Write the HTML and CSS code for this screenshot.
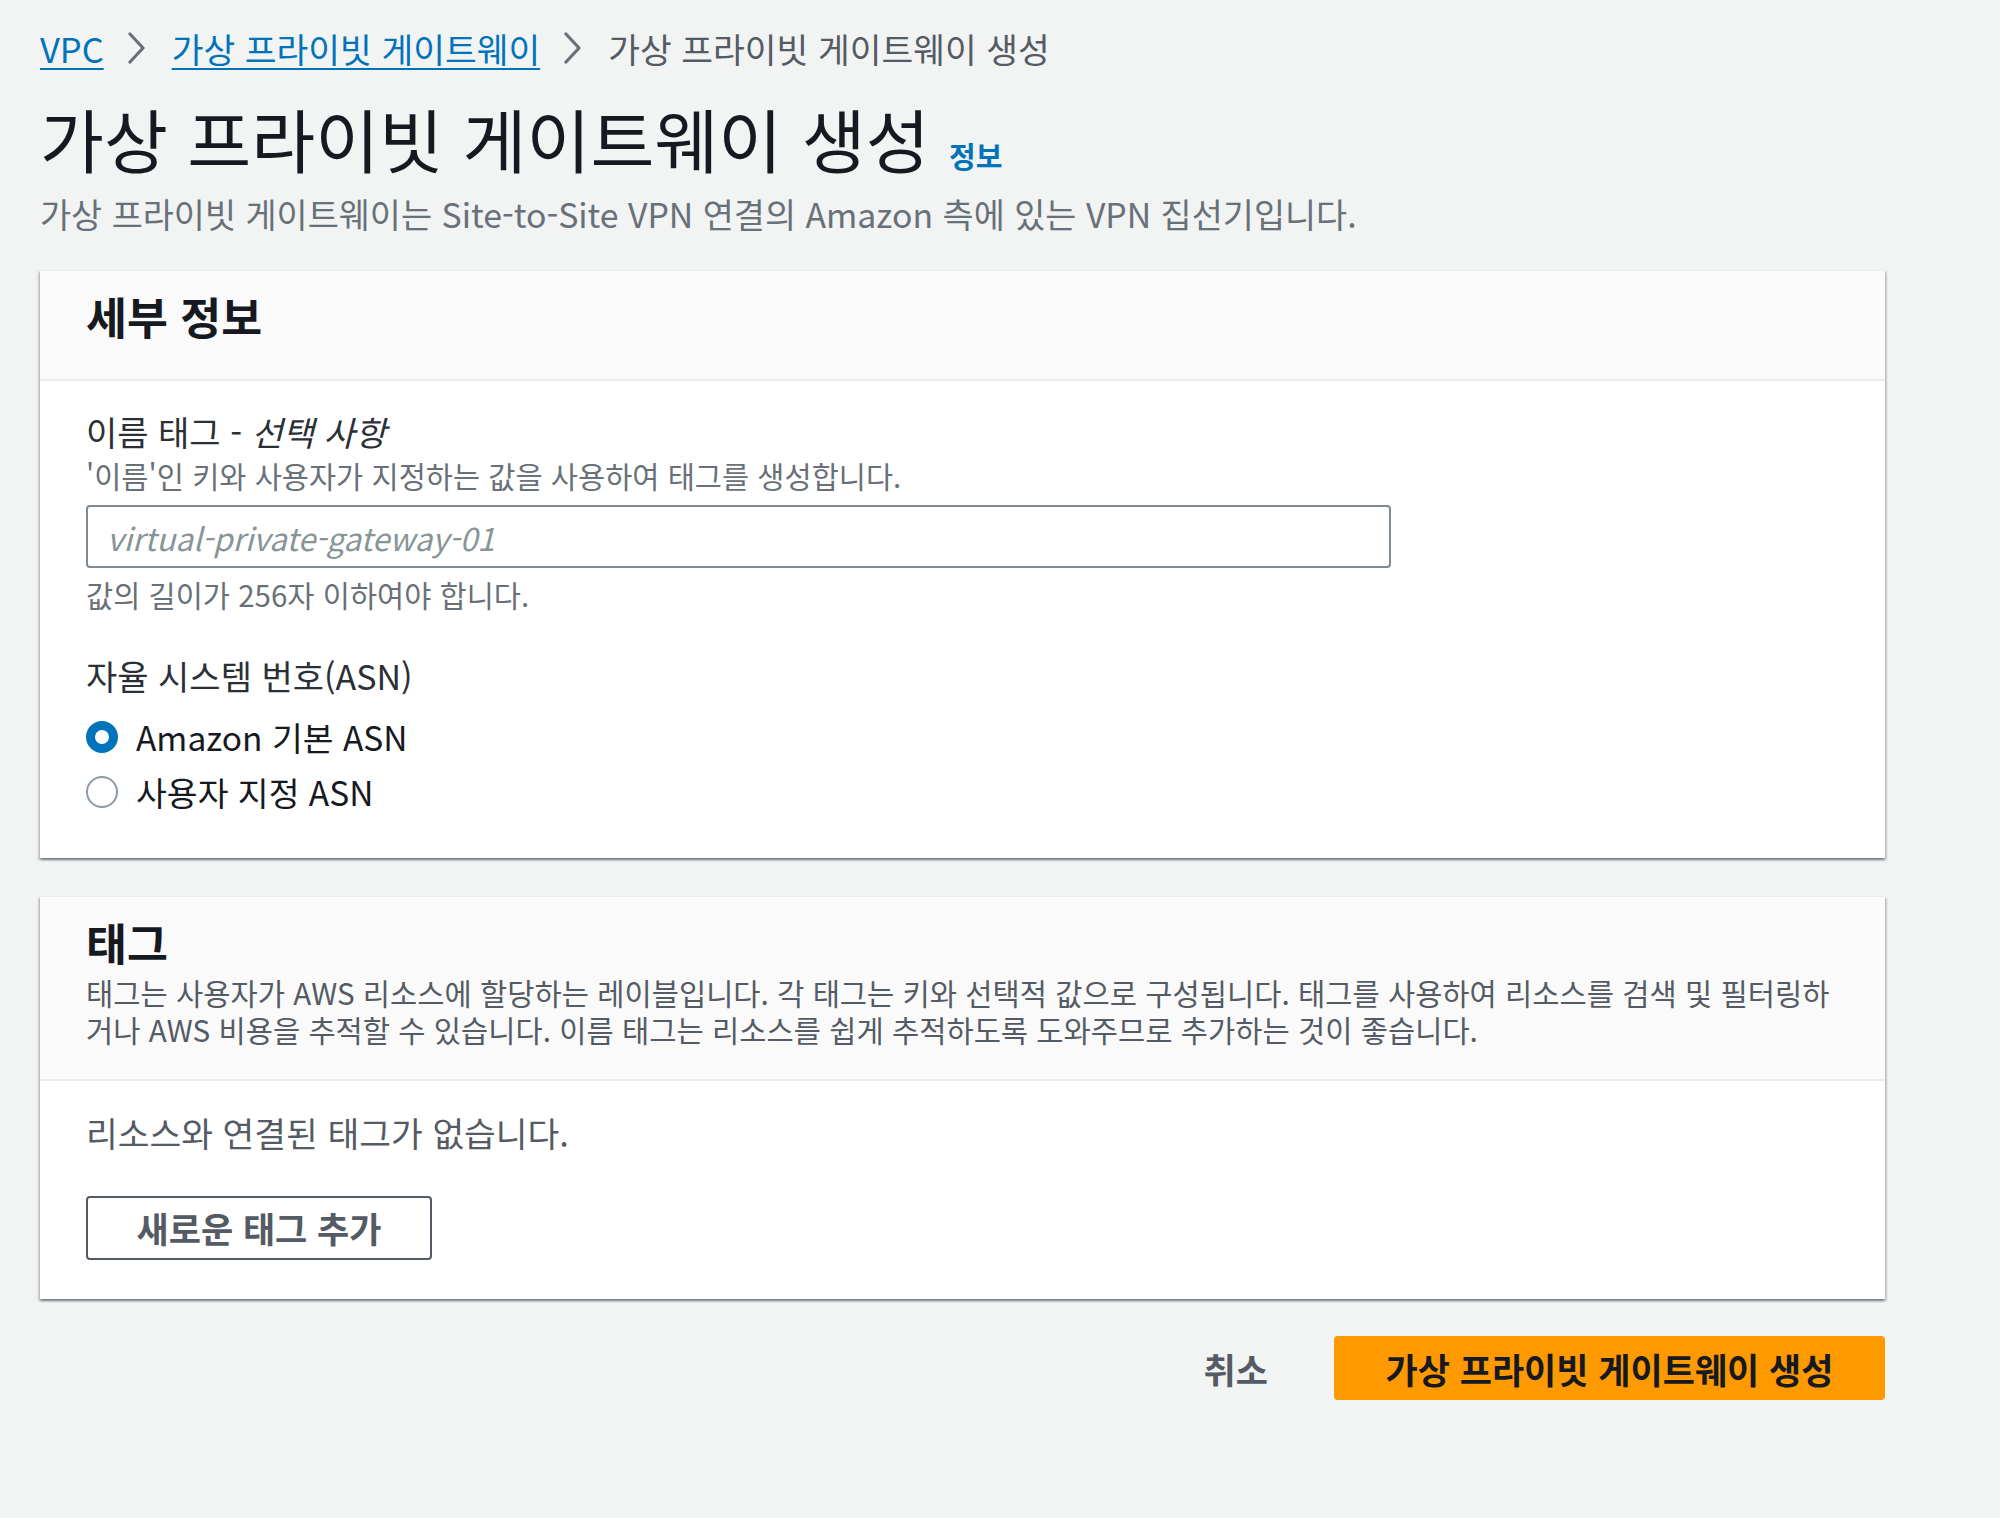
FILE: index.html
```html
<!DOCTYPE html>
<html lang="ko">
<head>
<meta charset="utf-8">
<title>가상 프라이빗 게이트웨이 생성</title>
<link rel="stylesheet" href="styles.css">
</head>
<body>
<div class="page">
  <nav class="breadcrumb">
    <a href="#" class="crumb-link">VPC</a>
    <svg class="chev" viewBox="0 0 20 32" width="20" height="32"><path d="M4 2 L17 16 L4 30" fill="none" stroke="#687078" stroke-width="3.2" stroke-linejoin="round" stroke-linecap="round"/></svg>
    <a href="#" class="crumb-link">가상 프라이빗 게이트웨이</a>
    <svg class="chev" viewBox="0 0 20 32" width="20" height="32"><path d="M4 2 L17 16 L4 30" fill="none" stroke="#687078" stroke-width="3.2" stroke-linejoin="round" stroke-linecap="round"/></svg>
    <span class="crumb-current">가상 프라이빗 게이트웨이 생성</span>
  </nav>

  <h1 class="title">가상 프라이빗 게이트웨이 생성 <a href="#" class="info">정보</a></h1>
  <p class="subtitle">가상 프라이빗 게이트웨이는 Site-to-Site VPN 연결의 Amazon 측에 있는 VPN 집선기입니다.</p>

  <section class="card">
    <div class="card-header">
      <h2 class="card-title">세부 정보</h2>
    </div>
    <div class="card-body details">
      <div class="label">이름 태그 - <i class="opt">선택 사항</i></div>
      <div class="hint">'이름'인 키와 사용자가 지정하는 값을 사용하여 태그를 생성합니다.</div>
      <div class="input"><span class="placeholder">virtual-private-gateway-01</span></div>
      <div class="hint constraint">값의 길이가 256자 이하여야 합니다.</div>

      <div class="label asn-label">자율 시스템 번호(ASN)</div>
      <div class="radios">
        <div class="radio-row"><span class="radio checked"></span><span class="radio-text">Amazon 기본 ASN</span></div>
        <div class="radio-row"><span class="radio"></span><span class="radio-text">사용자 지정 ASN</span></div>
      </div>
    </div>
  </section>

  <section class="card">
    <div class="card-header tags-header">
      <h2 class="card-title">태그</h2>
      <p class="card-desc">태그는 사용자가 AWS 리소스에 할당하는 레이블입니다. 각 태그는 키와 선택적 값으로 구성됩니다. 태그를 사용하여 리소스를 검색 및 필터링하거나 AWS 비용을 추적할 수 있습니다. 이름 태그는 리소스를 쉽게 추적하도록 도와주므로 추가하는 것이 좋습니다.</p>
    </div>
    <div class="card-body tags-body">
      <div class="empty">리소스와 연결된 태그가 없습니다.</div>
      <button class="btn-normal">새로운 태그 추가</button>
    </div>
  </section>

  <div class="actions">
    <button class="btn-link">취소</button>
    <button class="btn-primary">가상 프라이빗 게이트웨이 생성</button>
  </div>
</div>
</body>
</html>
```

FILE: styles.css
```css
* { box-sizing: border-box; }

html, body {
  margin: 0;
  padding: 0;
  background: #f2f3f3;
}

body {
  font-family: "Noto Sans CJK KR", "Noto Sans", sans-serif;
  color: #16191f;
}

.page {
  width: 1885px;
  padding: 26px 0 80px 40px;
}

.breadcrumb {
  display: flex;
  align-items: center;
  height: 44px;
  font-size: 34.5px;
  line-height: 44px;
}

.crumb-link {
  color: #0073bb;
  text-decoration: underline;
  text-underline-offset: 5px;
  text-decoration-thickness: 2px;
}

.chev {
  margin: 0 26px 0 22px;
  flex: none;
}

.crumb-current {
  color: #545b64;
}

.title {
  margin: 28px 0 0 0;
  font-size: 69.5px;
  font-weight: 400;
  line-height: 80px;
  color: #16191f;
}

.info {
  font-size: 29px;
  font-weight: 700;
  line-height: 1;
  color: #0073bb;
  text-decoration: none;
}

.subtitle {
  margin: 13px 0 0 0;
  font-size: 33.8px;
  line-height: 46px;
  color: #687078;
}

.card {
  margin-top: 33px;
  width: 1845px;
  background: #ffffff;
  border-top: 1px solid #eaeded;
  box-shadow: 0 2px 2px rgba(0, 28, 36, 0.35), 2px 2px 2px rgba(0, 28, 36, 0.15), -2px 2px 2px rgba(0, 28, 36, 0.15);
}

.card + .card {
  margin-top: 38px;
}

.card-header {
  background: #fafafa;
  border-bottom: 2px solid #eaeded;
  padding: 20px 46px 38px 46px;
}

.card-title {
  margin: 0;
  font-size: 44.5px;
  font-weight: 700;
  line-height: 50px;
  color: #16191f;
}

.tags-header {
  padding-bottom: 31px;
}

.card-desc {
  margin: 7px 0 0 0;
  font-size: 29.6px;
  line-height: 37px;
  color: #545b64;
}

.card-body {
  padding: 28px 46px 43px 46px;
}

.label {
  font-size: 34px;
  line-height: 46px;
  color: #2b3037;
}

.opt {
  font-style: italic;
}

.hint {
  margin-top: 2px;
  font-size: 29.5px;
  line-height: 37px;
  color: #687078;
}

.input {
  margin-top: 11px;
  width: 1305px;
  height: 63px;
  border: 2px solid #7f8993;
  border-radius: 4px;
  background: #fff;
  display: flex;
  align-items: center;
  padding: 0 19px;
}

.placeholder {
  font-size: 31.5px;
  font-style: italic;
  color: #879596;
}

.constraint {
  margin-top: 8px;
}

.asn-label {
  margin-top: 40px;
}

.radios {
  margin-top: 15px;
  display: flex;
  flex-direction: column;
  gap: 9px;
}

.radio-row {
  display: flex;
  align-items: center;
  height: 46px;
}

.radio {
  width: 32px;
  height: 32px;
  border-radius: 50%;
  border: 2px solid #8d99a8;
  background: #fff;
  margin-right: 18px;
  flex: none;
}

.radio.checked {
  border: 9px solid #0073bb;
}

.radio-text {
  font-size: 33.5px;
  line-height: 46px;
  color: #16191f;
}

.tags-body {
  padding-top: 28px;
  padding-bottom: 39px;
}

.empty {
  font-size: 34.5px;
  line-height: 46px;
  color: #545b64;
}

.btn-normal {
  margin-top: 41px;
  display: block;
  width: 346px;
  height: 64px;
  background: #fff;
  border: 2px solid #545b64;
  border-radius: 4px;
  font-family: inherit;
  font-size: 35px;
  font-weight: 700;
  color: #545b64;
  padding: 0;
  line-height: 58px;
}

.actions {
  width: 1845px;
  margin-top: 37px;
  display: flex;
  justify-content: flex-end;
  align-items: center;
  gap: 20px;
}

.btn-link {
  background: none;
  border: none;
  font-family: inherit;
  font-size: 35px;
  font-weight: 700;
  color: #545b64;
  padding: 0 46px;
  height: 64px;
}

.btn-primary {
  width: 551px;
  height: 64px;
  background: #ff9900;
  border: 2px solid #ff9900;
  border-radius: 4px;
  font-family: inherit;
  font-size: 35px;
  font-weight: 700;
  color: #16191f;
  padding: 0;
}
```
